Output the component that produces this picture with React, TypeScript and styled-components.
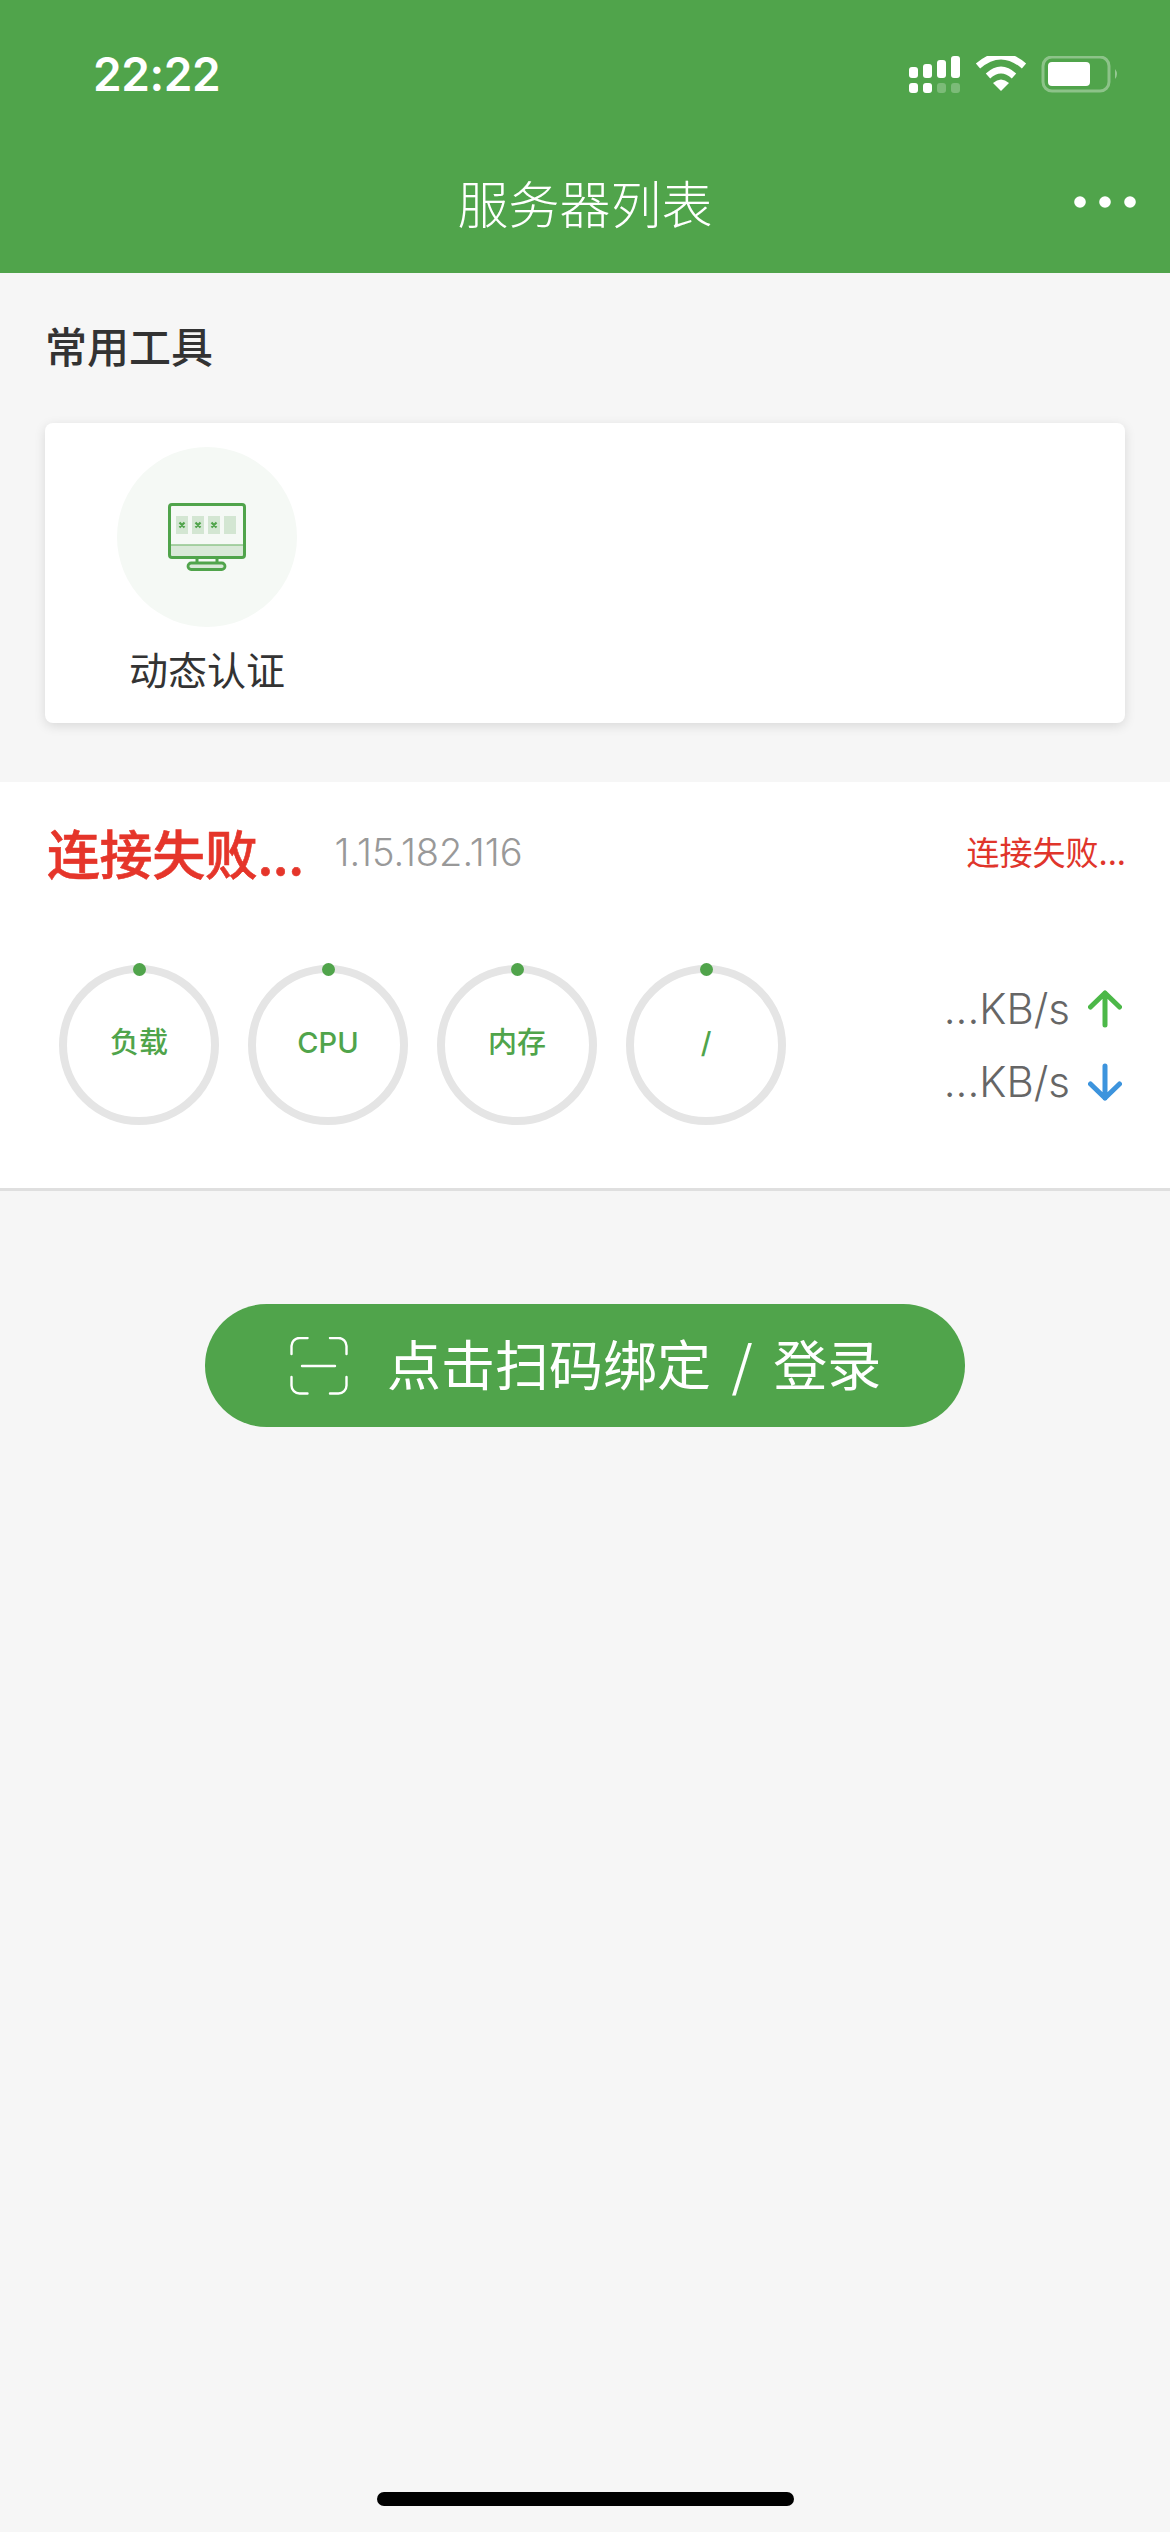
import React from "react";
import styled, { createGlobalStyle } from "styled-components";

const CJK = `"Noto Sans CJK SC", "Noto Sans", sans-serif`;
const LATIN = `Inter, "Noto Sans CJK SC", sans-serif`;

const Global = createGlobalStyle`
  html, body { margin: 0; padding: 0; background: #f6f6f6; }
  * { box-sizing: border-box; }
`;

const Page = styled.div`
  position: relative;
  width: 1170px;
  height: 2532px;
  background: #f6f6f6;
  overflow: hidden;
  font-family: ${CJK};
`;

const Header = styled.header`
  height: 273px;
  background: #50a44b;
  color: #fff;
  display: flex;
  flex-direction: column;
`;

const StatusBar = styled.div`
  height: 148px;
  padding: 50px 48px 0 93px;
  display: flex;
  justify-content: space-between;
  align-items: flex-start;
`;

const Clock = styled.span`
  font: 600 46px/48px ${LATIN};
  letter-spacing: -0.4px;
`;

const NavBar = styled.div`
  position: relative;
  height: 125px;
  display: flex;
  align-items: flex-start;
  justify-content: center;
  padding-top: 19px;
`;

const NavTitle = styled.h1`
  margin: 0;
  font: 300 51px/70px ${CJK};
`;

const MoreDots = styled.svg`
  position: absolute;
  right: 34px;
  top: 48px;
`;

const ToolsSection = styled.section`
  padding: 0 45px;
  height: 509px;
`;

const SectionTitle = styled.h2`
  margin: 0;
  padding-top: 43px;
  height: 150px;
  font: 500 42px/58px ${CJK};
  color: #333;
`;

const ToolCard = styled.div`
  height: 300px;
  background: #fff;
  border-radius: 8px;
  box-shadow: 0 3px 12px rgba(0, 0, 0, 0.12);
  padding: 24px 0 0 49px;
`;

const Tool = styled.div`
  width: 226px;
  display: flex;
  flex-direction: column;
  align-items: center;
`;

const ToolCircle = styled.div`
  width: 180px;
  height: 180px;
  border-radius: 50%;
  background: #f5f9f5;
  display: flex;
  align-items: center;
  justify-content: center;
`;

const ToolLabel = styled.span`
  margin-top: 14px;
  font: 400 39px/54px ${CJK};
  color: #333;
`;

const ServerCard = styled.section`
  height: 409px;
  background: #fff;
  border-bottom: 3px solid #dfdfdf;
  padding: 0 44px 0 47px;
`;

const ServerHead = styled.div`
  height: 180px;
  padding-top: 32px;
  display: flex;
  align-items: flex-start;
`;

const ServerName = styled.span`
  font: 500 53px/76px ${CJK};
  color: #e5352a;
  letter-spacing: -0.4px;
  -webkit-text-stroke: 0.6px #e5352a;
`;

const ServerIp = styled.span`
  margin-left: 31px;
  padding-top: 16px;
  font: 300 38px/44px ${LATIN};
  color: #999;
`;

const ServerState = styled.span`
  margin-left: auto;
  padding-top: 12px;
  font: 400 33px/50px ${CJK};
  color: #e0352b;
`;

const ServerBody = styled.div`
  display: flex;
  align-items: flex-start;
  justify-content: space-between;
`;

const Gauges = styled.div`
  display: flex;
  gap: 29px;
  padding-left: 12px;
`;

const Gauge = styled.div`
  position: relative;
  width: 160px;
  height: 160px;
  margin-top: 3px;
  border: 8px solid #e5e5e5;
  border-radius: 50%;
  display: flex;
  align-items: center;
  justify-content: center;
  padding-bottom: 4px;
  font: 500 29px/40px ${LATIN};
  color: #50a44b;
`;

const GaugeDot = styled.span`
  position: absolute;
  top: -10.5px;
  left: 50%;
  width: 13px;
  height: 13px;
  margin-left: -6.5px;
  border-radius: 50%;
  background: #50a44b;
`;

const Speeds = styled.div`
  display: flex;
  flex-direction: column;
  gap: 21px;
  padding: 21px 4px 0 0;
`;

const SpeedRow = styled.div`
  display: flex;
  align-items: center;
  gap: 18px;
  height: 52px;
  font: 300 42px/52px ${LATIN};
  color: #666;
`;

const ActionArea = styled.div`
  display: flex;
  justify-content: center;
  padding-top: 113px;
`;

const ScanButton = styled.button`
  width: 760px;
  height: 123px;
  border: 0;
  border-radius: 62px;
  background: #50a44b;
  color: #fff;
  display: flex;
  align-items: center;
  padding: 0 0 0 85px;
  gap: 39px;
  font: 400 54px/70px ${CJK};
`;

const ScanLabel = styled.span`
  position: relative;
  top: -3px;
  word-spacing: 8.5px;
`;

const HomeIndicator = styled.div`
  position: absolute;
  left: 377px;
  bottom: 26px;
  width: 417px;
  height: 14px;
  border-radius: 7px;
  background: #000;
`;

const StatusSvg = styled.svg`
  margin-top: 6px;
`;

const ArrowSvg = styled.svg<{ $down?: boolean }>`
  transform: ${(p) => (p.$down ? "scaleY(-1)" : "none")};
`;

const StatusIcons = () => (
  <StatusSvg width="213" height="44" viewBox="0 0 213 44" fill="#fff">
    <rect x="0" y="11" width="9" height="11" rx="3" />
    <rect x="14" y="8" width="9" height="14" rx="3" />
    <rect x="28" y="4" width="9" height="18" rx="3" />
    <rect x="42" y="0" width="9" height="22" rx="3" />
    <rect x="0" y="27" width="9" height="10" rx="3" />
    <rect x="14" y="27" width="9" height="10" rx="3" />
    <rect x="28" y="27" width="9" height="10" rx="3" opacity=".25" />
    <rect x="42" y="27" width="9" height="10" rx="3" opacity=".25" />
    <path d="M69 10 Q92 -10 115 10" fill="none" stroke="#fff" strokeWidth="6.5" />
    <path d="M79 20 Q92 8 105 20" fill="none" stroke="#fff" strokeWidth="6.5" />
    <path d="M84 27 Q92 20 100 27 L92 35 Z" />
    <rect x="134" y="1" width="66" height="34" rx="9" fill="none" stroke="#fff" strokeOpacity=".35" strokeWidth="3" />
    <rect x="139" y="6" width="42" height="24" rx="4" />
    <path d="M206 13 Q210 18 206 23 Z" fillOpacity=".4" />
  </StatusSvg>
);

const MonitorIcon = () => (
  <svg width="78" height="68" viewBox="0 0 78 68" fill="none">
    <rect x="8" y="13" width="12" height="18" fill="#d3e6d2" />
    <rect x="24" y="13" width="12" height="18" fill="#d3e6d2" />
    <rect x="40" y="13" width="12" height="18" fill="#d3e6d2" />
    <rect x="56" y="13" width="12" height="18" fill="#d3e6d2" />
    <path d="M11.500 19.500l5 5M16.500 19.500l-5 5M27.500 19.500l5 5M32.500 19.500l-5 5M43.500 19.500l5 5M48.500 19.500l-5 5" stroke="#50a44b" strokeWidth="2.200" />
    <rect x="2" y="42" width="74" height="11" fill="#d9e9d8" />
    <path d="M2 42h74" stroke="#8fc58b" strokeWidth="1.5" />
    <rect x="1.5" y="1.5" width="75" height="53" rx="2.5" stroke="#50a44b" strokeWidth="3" />
    <path d="M29 55v5M49 55v5" stroke="#50a44b" strokeWidth="3" />
    <rect x="20" y="60" width="37" height="6.5" rx="3.2" fill="#d9e9d8" stroke="#50a44b" strokeWidth="2.800" />
  </svg>
);

const Arrow = ({ color, down }: { color: string; down?: boolean }) => (
  <ArrowSvg $down={down} width="34" height="38" viewBox="0 0 34 38" fill="none" stroke={color} strokeWidth="5" strokeLinecap="round" strokeLinejoin="round">
    <path d="M17 35V3M2.5 17L17 3l14.5 14" />
  </ArrowSvg>
);

const ScanIcon = () => (
  <svg width="58" height="58" viewBox="0 0 58 58" fill="none" stroke="#fff" strokeWidth="2.4" strokeLinecap="round">
    <path d="M1.500 17V9a8 8 0 0 1 8-8h8M40 1h8.500a8 8 0 0 1 8 8v8M1.500 40v8.500a8 8 0 0 0 8 8h8M40 56.500h8.500a8 8 0 0 0 8-8V40M12 29h33" />
  </svg>
);

const gauges = ["负载", "CPU", "内存", "/"];

export default function App() {
  return (
    <Page>
      <Global />
      <Header>
        <StatusBar>
          <Clock>22:22</Clock>
          <StatusIcons />
        </StatusBar>
        <NavBar>
          <NavTitle>服务器列表</NavTitle>
          <MoreDots width="62" height="12" viewBox="0 0 62 12" fill="#fff">
            <circle cx="6" cy="6" r="5.800" />
            <circle cx="31" cy="6" r="5.800" />
            <circle cx="56" cy="6" r="5.800" />
          </MoreDots>
        </NavBar>
      </Header>
      <ToolsSection>
        <SectionTitle>常用工具</SectionTitle>
        <ToolCard>
          <Tool>
            <ToolCircle>
              <MonitorIcon />
            </ToolCircle>
            <ToolLabel>动态认证</ToolLabel>
          </Tool>
        </ToolCard>
      </ToolsSection>
      <ServerCard>
        <ServerHead>
          <ServerName>连接失败...</ServerName>
          <ServerIp>1.15.182.116</ServerIp>
          <ServerState>连接失败...</ServerState>
        </ServerHead>
        <ServerBody>
          <Gauges>
            {gauges.map((g) => (
              <Gauge key={g}>
                <GaugeDot />
                {g}
              </Gauge>
            ))}
          </Gauges>
          <Speeds>
            <SpeedRow>
              ...KB/s <Arrow color="#4cb848" />
            </SpeedRow>
            <SpeedRow>
              ...KB/s <Arrow color="#3d94dd" down />
            </SpeedRow>
          </Speeds>
        </ServerBody>
      </ServerCard>
      <ActionArea>
        <ScanButton>
          <ScanIcon />
          <ScanLabel>点击扫码绑定 / 登录</ScanLabel>
        </ScanButton>
      </ActionArea>
      <HomeIndicator />
    </Page>
  );
}
